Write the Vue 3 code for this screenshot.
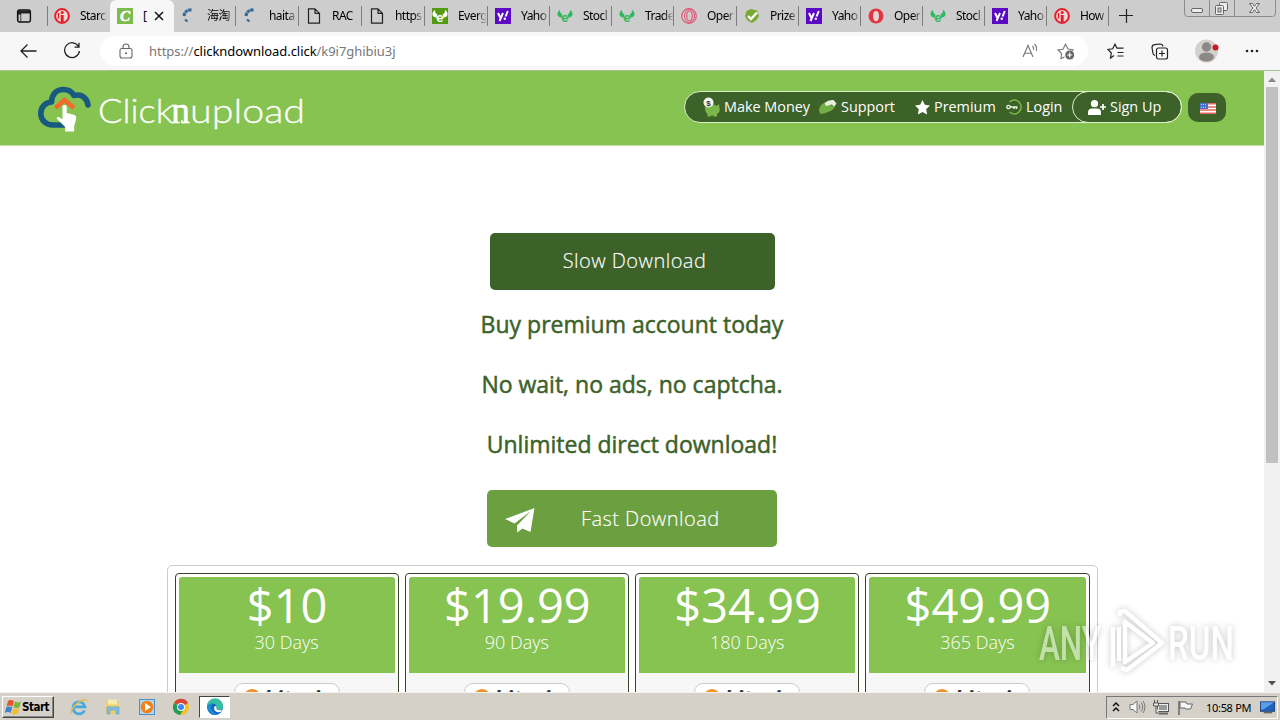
<template>
  <div class="screen">
    <div class="tab-strip">
      <div class="tab-menu">
        <svg width="16" height="16" viewBox="0 0 16 16">
          <rect x="1.600" y="2" width="12.800" height="12" rx="2" fill="none" stroke="#111" stroke-width="1.400" />
          <path d="M2 2.500h12v3H2zM2 5h3.200v9H2z" fill="#222" />
          <path d="M2.600 6.500h1.800v6.500h-1.800z" fill="#cdcdcd" />
        </svg>
      </div>
      <div
        v-for="(tab, index) in tabs"
        :key="index"
        class="tab"
        :class="{ 'is-active': tab.active, 'no-line': index === 0 || tab.active }"
        :style="{ width: tab.width + 'px' }"
      >
        <svg class="tab-icon" width="16" height="16" viewBox="0 0 16 16">
          <template v-if="tab.icon === 'info'">
            <circle cx="8" cy="8" r="6.900" fill="#f0d5d6" stroke="#e5202b" stroke-width="2" />
            <path d="M6.700 7h3v7h-3z" fill="#e5202b" />
            <circle cx="8.200" cy="4.500" r="1.600" fill="#e5202b" />
            <path d="M4.500 5v5.500" stroke="#e5202b" stroke-width="1.400" />
          </template>
          <template v-else-if="tab.icon === 'click'">
            <rect width="16" height="16" fill="#7dbb4c" />
            <text x="3" y="13" class="icon-c">C</text>
          </template>
          <template v-else-if="tab.icon === 'dots'">
            <path
              d="M10.500 1.800C6 2 3.500 4 3 8"
              fill="none"
              stroke="#2f6797"
              stroke-width="3"
              stroke-dasharray="3.200 .5"
            />
            <path d="M4 11.500l2.500 2" stroke="#2f6797" stroke-width="2.200" />
          </template>
          <path
            v-else-if="tab.icon === 'file'"
            d="M2.500 .8h6.500l4.500 4.500v9.900h-11zM9 .8v4.500h4.500"
            fill="none"
            stroke="#222"
            stroke-width="1.200"
            stroke-linejoin="round"
          />
          <template v-else-if="tab.icon === 'bull' || tab.icon === 'bullbox'">
            <rect v-if="tab.icon === 'bullbox'" width="16" height="16" fill="#549b12" />
            <g :fill="tab.icon === 'bullbox' ? '#fff' : '#2bb95b'">
              <path d="M3 2C.5 3.500-.5 6.500 1.500 8.500l3 1.500 1-3.500C3.500 5.500 3 4 3 2zM13 2c2.500 1.500 3.500 4.500 1.500 6.500l-3 1.500-1-3.500c2-1 2.500-2.500 2.500-4.500z" />
              <text x="4.300" y="13.500" class="icon-e">e</text>
            </g>
          </template>
          <template v-else-if="tab.icon === 'yahoo'">
            <rect width="16" height="16" fill="#5b09c4" />
            <path d="M3 5l2.500 5M8 5l-3.500 8M12.800 3l-2.200 5.500" stroke="#fff" stroke-width="2" />
            <circle cx="9.800" cy="10.700" r="1.200" fill="#fff" />
          </template>
          <template v-else-if="tab.icon === 'ring'">
            <circle cx="8" cy="8" r="7.300" fill="none" stroke="#e0567a" stroke-width="1.200" />
            <ellipse cx="8.500" cy="8" rx="5" ry="6.500" fill="none" stroke="#e0567a" />
            <ellipse cx="8.500" cy="8" rx="2.800" ry="5" fill="none" stroke="#e0567a" stroke-width="1.200" />
          </template>
          <template v-else-if="tab.icon === 'check'">
            <path d="M7 1l6 1.500L15 8l-2.500 4L8 15l-5-3-2-4 1.500-5z" fill="#78aa33" />
            <path d="M4 8l3 3 6-6.500" fill="none" stroke="#fff" stroke-width="2.400" />
          </template>
          <template v-else>
            <circle cx="8" cy="8" r="7.500" fill="#e3343f" />
            <ellipse cx="8" cy="8" rx="3" ry="5.300" fill="#e8d4d5" />
          </template>
        </svg>
        <span class="tab-title">{{ tab.title }}</span>
        <svg v-if="tab.active" class="tab-close" width="10" height="10" viewBox="0 0 10 10">
          <path d="M1 1l8 8M9 1l-8 8" stroke="#111" stroke-width="1.500" />
        </svg>
      </div>
      <svg class="tab-add" width="14" height="14" viewBox="0 0 14 14">
        <path d="M7.500 0v14M0 6.500h14" stroke="#222" stroke-width="1.200" />
      </svg>
      <div class="window-buttons">
        <svg width="92" height="17" viewBox="0 0 92 17">
          <path d="M.5 0v13q0 3.500 3 3.500h85q3 0 3-3.500V0M25.500 0v16M50.500 0v16" fill="none" stroke="#8b8b8b" />
          <rect x="7.500" y="8.500" width="11" height="4" rx="1.500" fill="#eee" stroke="#666" />
          <rect x="35.500" y="2.500" width="8" height="8" rx="1" fill="#eee" stroke="#666" />
          <rect x="31.500" y="5.500" width="8" height="9" rx="1" fill="#eee" stroke="#666" />
          <rect x="34" y="8" width="3" height="4" fill="#ccc" stroke="#666" />
          <path d="M65.500 3.500h3l2 3 2-3h3l-3.500 4.500 3.500 4.500h-3l-2-3-2 3h-3l3.500-4.500z" fill="#f1f1f1" stroke="#666" />
        </svg>
      </div>
    </div>

    <div class="toolbar">
      <svg class="back" width="17" height="14" viewBox="0 0 17 14">
        <path d="M16.500 7H1M7.500.5L1 7l6.500 6.500" fill="none" stroke="#222" stroke-width="1.300" />
      </svg>
      <svg class="reload" width="18" height="18" viewBox="0 0 18 18">
        <path d="M15.500 4.500A7.400 7.400 0 1 0 16.400 9M16 .8v4.400h-4.500" fill="none" stroke="#222" stroke-width="1.300" />
      </svg>
      <div class="address">
        <svg width="14" height="16" viewBox="0 0 14 16">
          <rect x="1" y="5.500" width="12" height="9.500" rx="2" fill="none" stroke="#666" stroke-width="1.100" />
          <path d="M4 5.500V4a3 3 0 0 1 6 0v1.500" fill="none" stroke="#666" stroke-width="1.100" />
          <circle cx="7" cy="10.300" r="1" fill="#555" />
        </svg>
        <span class="url">https://<b>clickndownload.click</b>/k9i7ghibiu3j</span>
        <svg class="read" width="18" height="16" viewBox="0 0 18 16">
          <path d="M1 14L6 2.500 11 14M2.700 10.200h6.600M10.500 3q1.500 1.500 1 4M12.500 1q3 3 1.700 7" fill="none" stroke="#777" stroke-width="1.100" />
        </svg>
        <svg width="18" height="18" viewBox="0 0 18 18">
          <path d="M7.500 15L4 16.500l.6-5L1 8l5-.8 2.500-5L11 7l5 .8-1.500 1.500" fill="none" stroke="#777" stroke-width="1.100" />
          <circle cx="12.700" cy="13" r="4.500" fill="#666" />
          <path d="M12.700 10.500v5M10.200 13h5" stroke="#fff" stroke-width="1.100" />
        </svg>
      </div>
      <div class="tools">
        <svg width="18" height="16" viewBox="0 0 18 16">
          <path d="M7 12.500L3.500 15l.8-5L1 6.500l4.700-.7L8 1.200l2 4h6.500M10.500 9.500h6M10.500 13h6" fill="none" stroke="#222" stroke-width="1.200" />
        </svg>
        <svg width="18" height="17" viewBox="0 0 18 17">
          <path d="M4 12.500Q2 12 1.800 9.500L1 4.500Q1 2 3.500 1.600L9 1q2.500 0 3 2.500" fill="none" stroke="#222" stroke-width="1.200" />
          <rect x="5.500" y="5" width="11" height="11" rx="2" fill="none" stroke="#222" stroke-width="1.200" />
          <path d="M11 7.500v6M8 10.500h6" stroke="#222" stroke-width="1.200" />
        </svg>
        <svg width="24" height="24" viewBox="0 0 24 24">
          <circle cx="11.500" cy="12" r="11.500" fill="#d3d0ce" />
          <circle cx="11.500" cy="8" r="4.700" fill="#8b8987" />
          <ellipse cx="11.500" cy="18" rx="7.500" ry="4.500" fill="#8b8987" />
          <circle cx="20.500" cy="8.500" r="3" fill="#d21322" />
        </svg>
        <svg width="14" height="4" viewBox="0 0 14 4">
          <circle cx="2" cy="2" r="1.300" fill="#222" />
          <circle cx="7" cy="2" r="1.300" fill="#222" />
          <circle cx="12" cy="2" r="1.300" fill="#222" />
        </svg>
      </div>
    </div>

    <div class="viewport">
      <div class="page">
        <header class="site-header">
          <svg class="logo" width="270" height="54" viewBox="0 0 270 54">
            <path
              d="M26 41H15C8 41 2.800 36 2.800 29.500S7.500 18.500 13.500 18C14 10 18.500 5.500 25.500 5.500c5 0 8.500 2.500 10.500 6C43.500 9.500 49 14 50 21"
              fill="none"
              stroke="#17597f"
              stroke-width="5.600"
              stroke-linecap="round"
              stroke-linejoin="round"
            />
            <path d="M17.500 24L26.500 16l9.500 8" fill="none" stroke="#f26b2c" stroke-width="4.500" />
            <path d="M24.500 22q2-2 4.200 0V29l8 2q2 1 1.500 4l-2 7v5.500h-9V43L18.500 34.500q1-2.500 4-.5l2 1.500z" fill="#fff" />
            <g class="logo-text">
              <text x="60" y="38.500" textLength="75" lengthAdjust="spacingAndGlyphs">Click</text>
              <text x="133" y="38.500" class="logo-n" textLength="19" lengthAdjust="spacingAndGlyphs">n</text>
              <text x="152" y="38.500" textLength="115" lengthAdjust="spacingAndGlyphs">upload</text>
            </g>
            <path d="M148.500 36q-1 3-4 2.500-2-1.500 0-2.500" fill="none" stroke="#fff" stroke-width="1.300" />
          </svg>
          <nav class="menu">
            <a class="menu-item money">
              <svg width="18" height="20" viewBox="0 0 18 20">
                <path d="M2 10q6-5 12-1l2-2 .5 4q1 4-2.500 6v2.500h-3.500L9 18l-1.500 1.500H4.500V17Q1.500 14 2 10z" fill="#7ab648" />
                <circle cx="5.500" cy="5.500" r="5" fill="#f4f8f0" />
                <text x="3.300" y="8.500" class="coin">$</text>
              </svg>Make Money
            </a>
            <a class="menu-item support">
              <svg width="18" height="16" viewBox="0 0 18 16">
                <path d="M0 11Q1 4 8 3l5 4 3-1q0 5-7 7-4 2.500-8 1.500z" fill="#72ad45" />
                <path d="M5.500 4q4-3.500 9-3l3 3.500-2 3-3-2-4 1.200L7 7z" fill="#e5efdb" />
              </svg>Support
            </a>
            <a class="menu-item premium">
              <svg width="15" height="15" viewBox="0 0 15 15">
                <path d="M7.500 0l2.300 4.800 5.200.7-3.800 3.700.9 5.300-4.600-2.500-4.600 2.500.9-5.300L0 5.500l5.200-.7z" fill="#fff" />
              </svg>Premium
            </a>
            <a class="menu-item login">
              <svg width="16" height="16" viewBox="0 0 16 16">
                <path d="M3.500 3A6.900 6.900 0 1 1 3.500 13" fill="none" stroke="#7cb84c" stroke-width="1.500" />
                <circle cx="2.500" cy="8" r="1.700" fill="none" stroke="#e9f3e0" stroke-width="1.300" />
                <path d="M4 8h7.500M8 8v2M10.500 8v2" stroke="#e9f3e0" stroke-width="1.500" />
              </svg>Login
            </a>
            <a class="menu-item signup">
              <svg width="18" height="15" viewBox="0 0 18 15">
                <circle cx="6.500" cy="3.700" r="3.600" fill="#fff" />
                <path d="M0 15v-2.500Q0 8.500 4 8.500h5q4 0 4 4V15z" fill="#fff" />
                <path d="M15 4v6M12 7h6" stroke="#fff" stroke-width="1.700" />
              </svg>Sign Up
            </a>
          </nav>
          <div class="language">
            <svg width="16" height="11" viewBox="0 0 16 11">
              <rect width="16" height="11" fill="#fff" />
              <path d="M0 .8h16M0 3.900h16M0 7h16M0 10.200h16" stroke="#e5655f" stroke-width="1.500" />
              <rect width="8" height="6" fill="#4770cf" />
              <path d="M1 1.500h6M1 4.300h6" stroke="#dfe8ff" stroke-width=".8" stroke-dasharray="1 1" />
            </svg>
          </div>
        </header>

        <main class="content">
          <button class="btn slow">Slow Download</button>
          <h3>Buy premium account today</h3>
          <h3>No wait, no ads, no captcha.</h3>
          <h3>Unlimited direct download!</h3>
          <button class="btn fast">
            <svg width="30" height="25" viewBox="0 0 30 25">
              <path d="M0 11L29.500 0 25.500 24 17.500 20.500 12 24.500V17.500L26 3 9.500 15.500z" fill="#fff" />
            </svg>
            <span>Fast Download</span>
          </button>

          <div class="plans">
            <div v-for="plan in plans" :key="plan.price" class="plan">
              <div class="plan-head">
                <div class="price">{{ plan.price }}</div>
                <div class="days">{{ plan.days }}</div>
              </div>
              <div class="plan-body">
                <div class="payment">
                  <i class="coin-dot"></i>
                  <span>bitcoin</span>
                </div>
              </div>
            </div>
          </div>
        </main>
      </div>
      <div class="scrollbar">
        <svg width="16" height="16" viewBox="0 0 16 16"><path d="M4 11l4-4.500 4 4.500z" fill="#8a8a8a" /></svg>
        <div class="thumb"></div>
        <svg class="down" width="16" height="16" viewBox="0 0 16 16"><path d="M4 5l4 4.500L12 5z" fill="#505050" /></svg>
      </div>
    </div>

    <svg class="watermark" width="210" height="80" viewBox="0 0 210 80">
      <g class="wm-text">
        <text x="8" y="60" textLength="62" lengthAdjust="spacingAndGlyphs">ANY</text>
        <text x="137" y="60" textLength="66" lengthAdjust="spacingAndGlyphs">RUN</text>
      </g>
      <path d="M82 27v40M88 27v34M89 16v-4l5-1 37 32-35 27-6-2M94 22v40l28-19z" fill="none" class="wm-mark" />
    </svg>

    <footer class="taskbar">
      <div class="start">
        <svg width="17" height="16" viewBox="0 0 17 16">
          <path d="M3 2q3-2 6 0L7.500 7.500q-3-2-6 0z" fill="#e4572b" />
          <path d="M10 2.500q3 2 6 0L14.500 8q-3 2-6 0z" fill="#72b63c" />
          <path d="M1.200 8.500q3-2 6 0L5.700 14q-3-2-6 0z" fill="#4081cf" />
          <path d="M8.200 9q3 2 6 0l-1.500 5.500q-3 2-6 0z" fill="#f3c02b" />
        </svg>
        <b>Start</b>
      </div>
      <div class="launch">
        <svg width="18" height="18" viewBox="0 0 18 18">
          <path d="M14.500 12.500A6 6 0 1 1 15 8.800H4" fill="none" stroke="#47a9e0" stroke-width="2.800" />
          <path d="M1.500 16Q0 11 7 5.500T17 2.500" fill="none" stroke="#e9bd44" stroke-width="1.500" />
        </svg>
        <svg width="18" height="18" viewBox="0 0 18 18">
          <path d="M2 3l5-1 1 2h7v12H2z" fill="#edcf72" />
          <path d="M4 1.500h9v5H4z" fill="#f7eab0" />
          <path d="M3 16V9h12v7h-3v-4H6v4z" fill="#83bee0" stroke="#5c9fc8" stroke-width=".6" />
        </svg>
        <svg width="18" height="18" viewBox="0 0 18 18">
          <rect x="1.500" y="1.500" width="15" height="15" fill="#b2d6ef" stroke="#4c8ec5" />
          <circle cx="9" cy="9" r="6.300" fill="#f08118" />
          <path d="M7 5l6 4-6 4z" fill="#fff" />
        </svg>
        <svg width="18" height="18" viewBox="0 0 18 18">
          <circle cx="9" cy="9" r="8" fill="#f3c327" />
          <path d="M9 9L2 5a8 8 0 0 1 14 0z" fill="#db4437" />
          <path d="M9 9l-7-4a8 8 0 0 0 6 12l4-6z" fill="#279b50" />
          <circle cx="9" cy="9" r="4" fill="#fff" />
          <circle cx="9" cy="9" r="3" fill="#4285f4" />
        </svg>
        <div class="launch-active">
          <svg width="18" height="18" viewBox="0 0 18 18">
            <circle cx="9" cy="9" r="8" fill="#1468bd" />
            <path d="M1 8.500A8 8 0 0 1 17 8q.3 4-4.500 4-3 0-2-2 .5-4-3.500-4.500Q3 5.500 1 8.500z" fill="#38bfa2" />
            <path d="M1 9q2-4 6-3.500Q3.500 9 6.500 13q2 3 5 3.500Q3 19 1 9z" fill="#1b8bd8" />
            <path d="M8.500 8.500q1.500-1 2 .5-1 3 2.500 3.200 2 .1 3.500-.7-2 3.500-5.500 2.500Q7 12.500 8.500 8.500z" fill="#fff" />
          </svg>
        </div>
      </div>
      <div class="tray">
        <svg width="8" height="12" viewBox="0 0 8 12">
          <path d="M1 5l3-3 3 3M1 10l3-3 3 3" fill="none" stroke="#111" stroke-width="1.500" />
        </svg>
        <svg class="sound" width="17" height="14" viewBox="0 0 17 14">
          <path d="M1 4.500h3L8 1v12L4 9.500H1z" fill="#f7f7f7" stroke="#777" />
          <path d="M10 4.500q2 2.500 0 5M12 2.500q3.500 4.500 0 9M14 1q4 6 0 12" fill="none" stroke="#777" />
        </svg>
        <svg class="net" width="17" height="15" viewBox="0 0 17 15">
          <rect x="4.500" y="3.500" width="11" height="8" fill="#999" stroke="#555" />
          <rect x="5.500" y="4.500" width="9" height="6" fill="none" stroke="#eee" />
          <path d="M6 13.500h9" stroke="#666" stroke-width="2" />
          <path d="M1.500 0v3M4.500 0v3M.5 3h5v3h-5zM3 6v7h3" fill="#eee" stroke="#555" />
        </svg>
        <svg class="flag" width="17" height="15" viewBox="0 0 17 15">
          <path d="M2 1v14" stroke="#666" stroke-width="1.500" />
          <path d="M3 2h6l1 2h5.500l-2 5H8.500L8 8H3z" fill="#f6f6f6" stroke="#666" />
        </svg>
        <span class="clock">10:58 PM</span>
        <svg class="desktop" width="15" height="13" viewBox="0 0 16 13">
          <rect x=".5" y=".5" width="15" height="10" fill="#1f63bd" stroke="#19427c" />
          <path d="M1 1h14L3 9H1z" fill="#5b9de8" />
          <path d="M4 12h9" stroke="#666" stroke-width="1.500" />
        </svg>
      </div>
    </footer>
  </div>
</template>

<script setup>
const tabs = [
  { title: 'Starc', icon: 'info', width: 63 },
  { title: '[', icon: 'click', width: 64, active: true },
  { title: '海淘', icon: 'dots', width: 62 },
  { title: 'haita', icon: 'dots', width: 63 },
  { title: 'RAC', icon: 'file', width: 63 },
  { title: 'https', icon: 'file', width: 63 },
  { title: 'Everg', icon: 'bullbox', width: 63 },
  { title: 'Yaho', icon: 'yahoo', width: 62 },
  { title: 'Stocl', icon: 'bull', width: 62 },
  { title: 'Trade', icon: 'bull', width: 62 },
  { title: 'Oper', icon: 'ring', width: 63 },
  { title: 'Prize', icon: 'check', width: 62 },
  { title: 'Yaho', icon: 'yahoo', width: 62 },
  { title: 'Oper', icon: 'opera', width: 62 },
  { title: 'Stocl', icon: 'bull', width: 62 },
  { title: 'Yaho', icon: 'yahoo', width: 62 },
  { title: 'How', icon: 'info', width: 62 }
]

const plans = [
  { price: '$10', days: '30 Days' },
  { price: '$19.99', days: '90 Days' },
  { price: '$34.99', days: '180 Days' },
  { price: '$49.99', days: '365 Days' }
]
</script>

<style>
body {
  margin: 0;
  overflow: hidden;
}
</style>

<style scoped>
.screen {
  position: relative;
  display: flex;
  flex-direction: column;
  width: 1280px;
  height: 720px;
  overflow: hidden;
  background: #fff;
  font-family: "Open Sans", "Noto Sans", "Noto Sans CJK SC", sans-serif;
}

.screen * {
  box-sizing: border-box;
}

svg {
  display: block;
  flex-shrink: 0;
}

.tab-strip {
  display: flex;
  height: 32px;
  background: #cdcdcd;
}

.tab-menu {
  width: 48px;
  margin-right: -1px;
  padding: 8px 0 0 16px;
  background: linear-gradient(#7d7d7d, #7d7d7d) right 6px / 1px 20px no-repeat;
}

.tab {
  display: flex;
  align-items: center;
  flex-shrink: 0;
  padding-left: 7px;
  background: linear-gradient(#7d7d7d, #7d7d7d) right 6px / 1px 20px no-repeat;
}

.tab.no-line {
  background: none;
}

.tab.is-active {
  background: #f7f7f7;
  border-radius: 6px 6px 0 0;
}

.tab-title {
  width: 29px;
  margin-left: 10px;
  font-family: "Noto Sans", "Noto Sans CJK SC", sans-serif;
  font-size: 12px;
  line-height: 18px;
  letter-spacing: -0.55px;
  white-space: nowrap;
  color: #000;
  -webkit-mask-image: linear-gradient(90deg, #000 65%, transparent);
  mask-image: linear-gradient(90deg, #000 65%, transparent);
}

.is-active .tab-title {
  width: 4px;
  -webkit-mask-image: none;
  mask-image: none;
}

.tab-close {
  margin-left: 7px;
}

.icon-c {
  font: italic bold 15px "Liberation Serif", serif;
  fill: #fff;
  stroke: #fff;
  stroke-width: 0.6px;
}

.icon-e {
  font: bold 13px "Liberation Sans", sans-serif;
}

.tab-add {
  margin: 9px 0 0 10px;
}

.window-buttons {
  margin-left: 51px;
}

.toolbar {
  display: flex;
  align-items: center;
  height: 39px;
  background: #f7f7f7;
  border-bottom: 1px solid #a9c193;
}

.back {
  margin-left: 20px;
}

.reload {
  margin-left: 26px;
}

.address {
  display: flex;
  align-items: center;
  width: 988px;
  height: 30px;
  margin-left: 19px;
  padding: 0 13px 0 19px;
  background: #fff;
  border-radius: 15px;
}

.url {
  margin: 0 auto 0 16px;
  font-family: "Noto Sans", sans-serif;
  font-size: 13px;
  letter-spacing: -0.05px;
  color: #777;
}

.url b {
  font-weight: 400;
  color: #000;
}

.read {
  margin-right: 17px;
}

.tools {
  display: flex;
  flex: 1;
  align-items: center;
  justify-content: space-between;
  padding: 0 21px 0 19px;
}

.viewport {
  display: flex;
  height: 621px;
}

.page {
  display: flex;
  flex-direction: column;
  width: 1264px;
  overflow: hidden;
}

.site-header {
  display: flex;
  flex-shrink: 0;
  height: 75px;
  background: #86c351;
  border-bottom: 1px solid #c3d9b0;
}

.logo {
  margin: 13px 0 0 38px;
}

.logo-text {
  font-family: Lato, sans-serif;
  font-size: 33px;
  font-weight: 300;
  fill: #fff;
  stroke: #fff;
  stroke-width: 0.3px;
}

.logo-n {
  font-family: "Liberation Serif", serif;
  font-size: 38px;
  stroke-width: 0.5px;
}

.menu {
  display: flex;
  width: 498px;
  height: 32px;
  margin: 20px 0 0 376px;
  padding-left: 18px;
  background: #3c622a;
  border: 1px solid #dcefca;
  border-radius: 16px;
}

.menu-item {
  display: flex;
  flex-shrink: 0;
  align-items: center;
  gap: 4px;
  font-size: 14.4px;
  line-height: 28px;
  white-space: nowrap;
  color: #fff;
}

.money {
  width: 116px;
  gap: 3px;
}

.support {
  width: 96px;
}

.premium {
  width: 91px;
}

.login {
  width: 66px;
}

.signup {
  width: 110px;
  height: 32px;
  margin: -1px -1px 0 0;
  padding: 0 0 0 15px;
  border: 1px solid #dcefca;
  border-radius: 16px;
}

.coin {
  font: bold 8px "Liberation Sans", sans-serif;
  fill: #333;
}

.language {
  display: flex;
  align-items: center;
  justify-content: center;
  width: 38px;
  height: 29px;
  margin: 22px 0 0 6px;
  padding: 1px 0 0 2px;
  background: #3c622a;
  border-radius: 10px;
}

.content {
  display: flex;
  flex-direction: column;
  align-items: center;
  padding-top: 87px;
}

.btn {
  flex-shrink: 0;
  height: 57px;
  padding: 0;
  border: 0;
  border-radius: 5px;
  font-family: "Open Sans", sans-serif;
  font-size: 20px;
  font-weight: 300;
  color: #fff;
  -webkit-text-stroke: 0.15px #fff;
}

.slow {
  width: 285px;
  margin-bottom: 4px;
  padding: 0 0 2px 5px;
  background: #3c622a;
  letter-spacing: 0.45px;
}

.content h3 {
  height: 60px;
  margin: 0;
  font-size: 23px;
  font-weight: 400;
  line-height: 60px;
  white-space: nowrap;
  color: #3c622a;
  -webkit-text-stroke: 0.5px #3c622a;
}

.fast {
  display: flex;
  align-items: center;
  width: 290px;
  margin: 16px 0 18px;
  padding-left: 18px;
  background: #6b9f3f;
}

.fast svg {
  margin-top: 4px;
}

.fast span {
  margin-left: 46px;
  letter-spacing: 0.45px;
}

.plans {
  display: flex;
  flex-shrink: 0;
  gap: 6px;
  width: 931px;
  height: 300px;
  padding: 7px;
  border: 1px solid #ccc;
  border-radius: 5px;
}

.plan {
  flex: 1;
  padding: 3px;
  border: 1px solid #34452c;
  border-radius: 4px;
}

.plan-head {
  height: 96px;
  background: #86c351;
  border-radius: 3px 3px 0 0;
  text-align: center;
  color: #fff;
}

.price {
  height: 53px;
  font-size: 47px;
  line-height: 56px;
  padding-left: 1px;
}

.days {
  font-size: 18px;
  font-weight: 300;
  line-height: 25px;
}

.plan-body {
  height: 190px;
  margin: 0 -3px;
  padding-top: 10px;
  background: #f7f7f7;
}

.payment {
  display: flex;
  align-items: flex-start;
  width: 106px;
  height: 36px;
  margin: 0 auto;
  padding: 5px 0 0 8px;
  background: #fff;
  border: 1px solid #ccc;
  border-radius: 9px;
}

.coin-dot {
  width: 18px;
  height: 18px;
  border-radius: 9px;
  background: #f0922b;
}

.payment span {
  margin: -3px 0 0 3px;
  font: italic bold 21px/24px "Noto Sans", sans-serif;
  color: #333;
}

.scrollbar {
  display: flex;
  flex-direction: column;
  width: 16px;
  background: #f1f1f1;
}

.thumb {
  width: 12px;
  height: 376px;
  margin: 0 auto;
  background: #c1c1c1;
}

.down {
  margin-top: auto;
}

.watermark {
  position: absolute;
  left: 1031px;
  top: 600px;
  opacity: 0.5;
  filter: drop-shadow(0 0 3px rgba(0, 0, 0, 0.45));
}

.wm-text {
  font-family: Roboto, sans-serif;
  font-size: 49px;
  font-weight: 500;
  fill: #fff;
}

.wm-mark {
  stroke: #fff;
  stroke-width: 4.5px;
  stroke-linejoin: round;
}

.taskbar {
  display: flex;
  align-items: center;
  height: 28px;
  background: #d5d0c8;
  border-top: 1px solid #f4f2ee;
  padding: 1px 2px 0;
}

.start {
  display: flex;
  align-items: center;
  width: 52px;
  height: 22px;
  padding-left: 2px;
  border: 1px solid;
  border-color: #fff #444 #444 #fff;
  box-shadow: inset -1px -1px #888;
}

.start b {
  font: bold 11.500px "DejaVu Sans Condensed", "DejaVu Sans", sans-serif;
  letter-spacing: -0.5px;
  color: #000;
}

.launch {
  display: flex;
  align-items: center;
  gap: 16px;
  margin-left: 16px;
}

.launch-active {
  width: 31px;
  height: 22px;
  margin-left: -7px;
  padding: 1px 0 0 6px;
  background: #fff;
  border: 1px solid;
  border-color: #444 #fff #fff #444;
}

.tray {
  display: flex;
  align-items: center;
  width: 172px;
  height: 23px;
  margin-left: auto;
  padding-left: 5px;
  border: 1px solid;
  border-color: #777 #fff #fff #777;
}

.sound {
  margin-left: 9px;
}

.net {
  margin-left: 7px;
}

.flag {
  margin-left: 7px;
}

.clock {
  width: 46px;
  margin-left: 12px;
  font-family: "Noto Sans", sans-serif;
  font-size: 11px;
  letter-spacing: -0.3px;
  white-space: nowrap;
  color: #000;
}

.desktop {
  margin-left: 8px;
}
</style>
